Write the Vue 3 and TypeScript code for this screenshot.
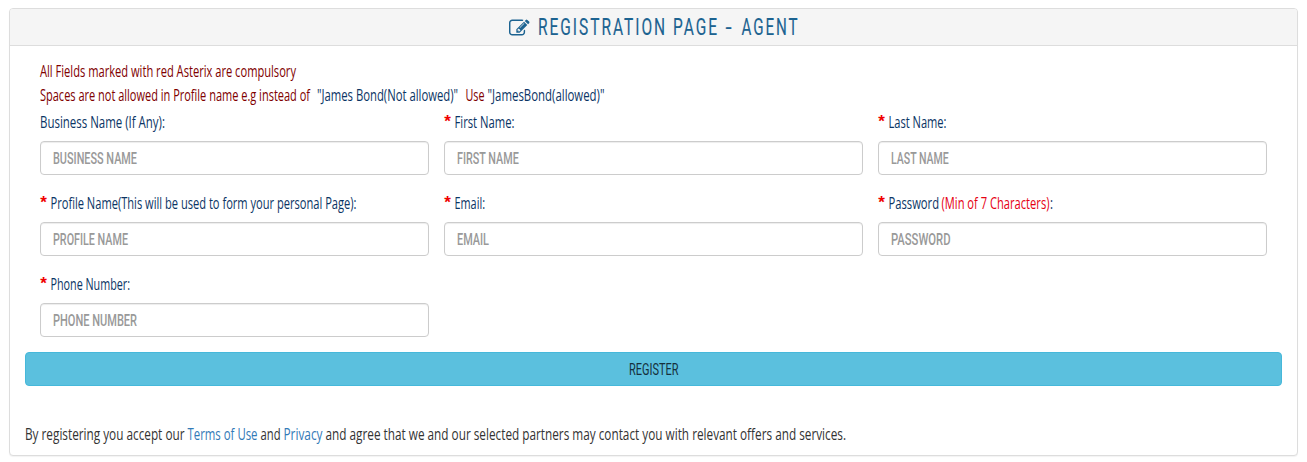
<script setup lang="ts">
import { ref } from 'vue'

interface Run {
  text: string
  x: number
  width: number
  tone?: string
}

interface Field {
  id: string
  type: string
  hint: string
  hintWidth: number
  required: boolean
  runs: Run[]
}

const notices: Run[][] = [
  [{ text: 'All Fields marked with red Asterix are compulsory', x: 0, width: 256, tone: 'maroon' }],
  [
    { text: 'Spaces are not allowed in Profile name e.g instead of', x: 0, width: 270, tone: 'maroon' },
    { text: '"James Bond(Not allowed)"', x: 277, width: 141, tone: 'navy' },
    { text: 'Use', x: 425.5, width: 19, tone: 'maroon' },
    { text: '"JamesBond(allowed)"', x: 447.5, width: 117, tone: 'navy' },
  ],
]

const fields: Field[] = [
  { id: 'business', type: 'text', hint: 'BUSINESS NAME', hintWidth: 84, required: false, runs: [{ text: 'Business Name (If Any):', x: 0, width: 125 }] },
  { id: 'first', type: 'text', hint: 'FIRST NAME', hintWidth: 62, required: true, runs: [{ text: 'First Name:', x: 10.5, width: 60 }] },
  { id: 'last', type: 'text', hint: 'LAST NAME', hintWidth: 58, required: true, runs: [{ text: 'Last Name:', x: 10.5, width: 58 }] },
  { id: 'profile', type: 'text', hint: 'PROFILE NAME', hintWidth: 75, required: true, runs: [{ text: 'Profile Name(This will be used to form your personal Page):', x: 10.5, width: 306 }] },
  { id: 'email', type: 'email', hint: 'EMAIL', hintWidth: 32, required: true, runs: [{ text: 'Email:', x: 10.5, width: 30.5 }] },
  {
    id: 'password', type: 'password', hint: 'PASSWORD', hintWidth: 59.5, required: true,
    runs: [
      { text: 'Password', x: 10.5, width: 50.5 },
      { text: '(Min of 7 Characters)', x: 63.5, width: 108, tone: 'red' },
      { text: ':', x: 172, width: 3 },
    ],
  },
  { id: 'phone', type: 'tel', hint: 'PHONE NUMBER', hintWidth: 84, required: true, runs: [{ text: 'Phone Number:', x: 10.5, width: 79.5 }] },
]

const values = ref<Record<string, string>>({})

const context = document.createElement('canvas').getContext('2d')
function condense(field: Field) {
  if (!context) return {}
  context.font = '500 17px Roboto, sans-serif'
  const ratio = field.hintWidth / context.measureText(field.hint).width
  return { transform: `scaleX(${ratio})`, width: `${100 / ratio}%` }
}
</script>

<template>
  <main class="page">
    <form class="panel" @submit.prevent>
      <header class="heading">
        <svg class="edit" viewBox="0 0 1792 1792">
          <path d="M888 1184l116-116-152-152-116 116v56h96v96h56zm440-720q-16-16-33 1l-350 350q-17 17-1 33t33-1l350-350q17-17 1-33zm80 594v190q0 119-84.5 203.5t-203.5 84.5h-832q-119 0-203.5-84.5t-84.5-203.5v-832q0-119 84.5-203.5t203.5-84.5h832q63 0 117 25 15 7 18 23 3 17-9 29l-49 49q-14 14-32 8-23-6-45-6h-832q-66 0-113 47t-47 113v832q0 66 47 113t113 47h832q66 0 113-47t47-113v-126q0-13 9-22l64-64q15-15 35-7t20 29zm-96-738l288 288-672 672h-288v-288zm444 132l-92 92-288-288 92-92q28-28 68-28t68 28l152 152q28 28 28 68t-28 68z" />
        </svg>
        <svg class="title" role="heading">
          <text x="-1" y="26" textLength="181" lengthAdjust="spacingAndGlyphs">REGISTRATION PAGE</text>
          <text x="186.5" y="26" textLength="9" lengthAdjust="spacingAndGlyphs">-</text>
          <text x="202.5" y="26" textLength="58" lengthAdjust="spacingAndGlyphs">AGENT</text>
        </svg>
      </header>

      <div class="body">
        <div class="inset">
          <svg v-for="(line, i) in notices" :key="i" class="line">
            <text v-for="run in line" :key="run.x" :class="run.tone" :x="run.x" y="17" :textLength="run.width" lengthAdjust="spacingAndGlyphs">{{ run.text }}</text>
          </svg>

          <div class="fields">
            <div v-for="field in fields" :key="field.id" class="field">
              <label :for="field.id">
                <svg class="line">
                  <text v-if="field.required" class="star" x="0.3" y="15">*</text>
                  <text v-for="run in field.runs" :key="run.x" :class="run.tone || 'navy'" :x="run.x" y="16" :textLength="run.width" lengthAdjust="spacingAndGlyphs">{{ run.text }}</text>
                </svg>
              </label>
              <div class="control">
                <input :id="field.id" v-model="values[field.id]" :type="field.type" :placeholder="field.hint" :style="condense(field)" />
              </div>
            </div>
          </div>
        </div>

        <button class="register" type="submit">
          <svg class="caption"><text x="0" y="22" textLength="49.5" lengthAdjust="spacingAndGlyphs">REGISTER</text></svg>
        </button>

        <svg class="line terms">
          <text x="0" y="17" textLength="159.5" lengthAdjust="spacingAndGlyphs">By registering you accept our</text>
          <a href="#terms"><text class="link" x="162.5" y="17" textLength="70" lengthAdjust="spacingAndGlyphs">Terms of Use</text></a>
          <text x="235.5" y="17" textLength="20" lengthAdjust="spacingAndGlyphs">and</text>
          <a href="#privacy"><text class="link" x="258.5" y="17" textLength="39" lengthAdjust="spacingAndGlyphs">Privacy</text></a>
          <text x="300.5" y="17" textLength="520.5" lengthAdjust="spacingAndGlyphs">and agree that we and our selected partners may contact you with relevant offers and services.</text>
        </svg>
      </div>
    </form>
  </main>
</template>

<style>
body {
  background: #fff;
}
</style>

<style scoped>
.page {
  box-sizing: border-box;
  height: 462px;
  padding: 8px 9px 6px;
  font-family: 'Open Sans', sans-serif;
}
.panel {
  box-sizing: border-box;
  height: 448px;
  border: 1px solid #ddd;
  border-radius: 4px;
  background: #fff;
  box-shadow: 0 1px 1px rgba(0, 0, 0, 0.05);
}
.heading {
  display: flex;
  justify-content: center;
  gap: 9px;
  height: 36px;
  border-bottom: 1px solid #ddd;
  border-radius: 3px 3px 0 0;
  background: #f5f5f5;
}
.edit {
  width: 20.5px;
  height: 20.5px;
  margin-top: 8.5px;
  fill: #1c6391;
}
.title {
  width: 259px;
  height: 36px;
  overflow: visible;
  font: 400 23.5px Roboto, sans-serif;
  letter-spacing: 3px;
  fill: #1c6391;
  stroke: #1c6391;
  stroke-width: 0.15px;
}
.body {
  padding: 14px 15px 0;
}
.inset {
  padding: 0 15px;
}
.line {
  display: block;
  width: 100%;
  height: 24px;
  overflow: visible;
  font-size: 16px;
  font-weight: 500;
}
.maroon {
  fill: #800000;
}
.navy {
  fill: #0b3565;
}
.red {
  fill: #e60012;
}
.star {
  font: 700 17px 'Liberation Sans', sans-serif;
  fill: #f00000;
}
.fields {
  display: grid;
  grid-template-columns: 389px 419px 389px;
  gap: 18px 15px;
  margin-top: 4px;
}
.field label {
  display: block;
  margin-bottom: 5px;
}
.control {
  box-sizing: border-box;
  height: 34px;
  padding: 0 12px;
  overflow: hidden;
  border: 1px solid #ccc;
  border-radius: 4px;
  background: #fff;
  box-shadow: inset 0 1px 1px rgba(0, 0, 0, 0.075);
}
.control input {
  display: block;
  box-sizing: border-box;
  height: 32px;
  padding: 0;
  border: 0;
  outline: 0;
  background: transparent;
  color: #555;
  font: 500 17px Roboto, sans-serif;
  transform-origin: 0 50%;
}
.control input::placeholder {
  color: #999;
  opacity: 1;
}
.register {
  display: flex;
  justify-content: center;
  box-sizing: border-box;
  width: 100%;
  height: 34px;
  margin-top: 15px;
  padding: 0;
  border: 1px solid #46b8da;
  border-radius: 4px;
  background: #5bc0de;
}
.caption {
  width: 50px;
  height: 32px;
  overflow: visible;
  font: 400 17px Roboto, sans-serif;
  fill: #16303c;
}
.terms {
  margin-top: 37px;
  fill: #333;
}
.link {
  fill: #337ab7;
}
</style>
